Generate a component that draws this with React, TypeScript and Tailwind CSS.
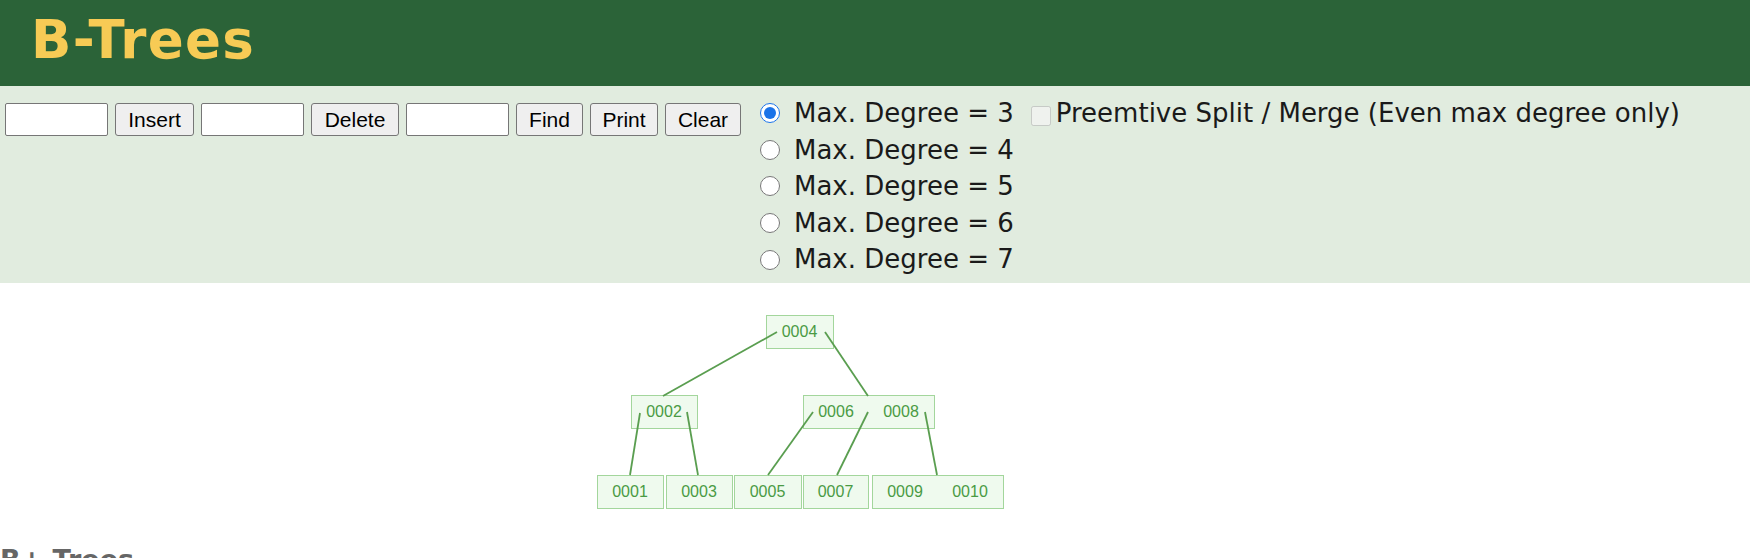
import { useState } from "react";

type TreeNode = { x: number; y: number; w: number; keys: string[] };

// page coordinates, the svg starts at y = 283
const TOP = 283;

const nodes: TreeNode[] = [
  { x: 766, y: 315, w: 67, keys: ["0004"] },
  { x: 631, y: 395, w: 66, keys: ["0002"] },
  { x: 803, y: 395, w: 131, keys: ["0006", "0008"] },
  { x: 597, y: 475, w: 66, keys: ["0001"] },
  { x: 666, y: 475, w: 66, keys: ["0003"] },
  { x: 734, y: 475, w: 67, keys: ["0005"] },
  { x: 803, y: 475, w: 65, keys: ["0007"] },
  { x: 872, y: 475, w: 131, keys: ["0009", "0010"] },
];

const edges = [
  [777, 332, 663, 396],
  [825, 332, 868, 396],
  [640, 413, 630, 475],
  [687, 412, 698, 475],
  [813, 412, 768, 475],
  [868, 412, 837, 475],
  [925, 412, 937, 475],
];

const degrees = [3, 4, 5, 6, 7];

const buttonClass =
  "h-[33px] rounded-[3px] border border-[#767676] bg-[#efefef] text-[21px] text-black font-['Liberation_Sans',Arial,sans-serif] leading-none";
const inputClass =
  "h-[33px] w-[103px] rounded-[2px] border border-[#767676] bg-white";

export default function App() {
  const [degree, setDegree] = useState(3);

  return (
    <div className="bg-white">
      <div className="h-[86px] bg-[#2b6338] pl-[31px] pt-[13px]">
        <h1 className="font-['DejaVu_Sans',Verdana,sans-serif] text-[53px] font-bold leading-none tracking-[1.4px] text-[#f7cb55]">
          B-Trees
        </h1>
      </div>

      <div className="flex h-[197px] items-start bg-[#e1ecdf] pl-[5px] pt-[9px]">
        <div className="mt-[8px] flex gap-[7px]">
          <input className={inputClass} />
          <button className={`${buttonClass} w-[79px]`}>Insert</button>
          <input className={inputClass} />
          <button className={`${buttonClass} w-[88px]`}>Delete</button>
          <input className={inputClass} />
          <button className={`${buttonClass} w-[67px]`}>Find</button>
          <button className={`${buttonClass} w-[68px]`}>Print</button>
          <button className={`${buttonClass} w-[76px]`}>Clear</button>
        </div>

        <div className="ml-[19px] flex flex-col font-['DejaVu_Sans',Verdana,sans-serif] text-[26px] leading-[36.6px] text-[#1a1a1a]">
          {degrees.map((d) => (
            <label key={d} className="flex items-center gap-[14px]">
              <input
                type="radio"
                name="degree"
                checked={degree === d}
                onChange={() => setDegree(d)}
                className="m-0 h-5 w-5 accent-[#1a73e8]"
              />
              <span>Max. Degree = {d}</span>
            </label>
          ))}
        </div>

        <label className="ml-[17px] flex items-start gap-[5px] font-['DejaVu_Sans',Verdana,sans-serif] text-[26px] leading-[36.6px] text-[#1a1a1a]">
          <input type="checkbox" disabled className="m-0 mt-[11px] h-5 w-5" />
          <span>Preemtive Split / Merge (Even max degree only)</span>
        </label>
      </div>

      <svg width="1750" height="263" className="block">
        {nodes.map((n, i) => (
          <g key={i}>
            <rect
              x={n.x + 0.5}
              y={n.y - TOP + 0.5}
              width={n.w}
              height={33}
              fill="#effaee"
              stroke="#a3d69c"
              strokeWidth="1"
            />
            {n.keys.map((k, j) => (
              <text
                key={k}
                x={n.keys.length === 1 ? n.x + n.w / 2 : n.x + 33 + 65 * j}
                y={n.y - TOP + 22}
                textAnchor="middle"
                fill="#4a9a44"
                fontSize="16"
                fontFamily="'Liberation Sans', Arial, sans-serif"
              >
                {k}
              </text>
            ))}
          </g>
        ))}
        {edges.map(([x1, y1, x2, y2], i) => (
          <line
            key={i}
            x1={x1}
            y1={y1 - TOP}
            x2={x2}
            y2={y2 - TOP}
            stroke="#5a9e50"
            strokeWidth="1.8"
          />
        ))}
      </svg>

      <h2 className="font-['DejaVu_Sans',Verdana,sans-serif] text-[27px] font-bold leading-none text-[#666]">
        B+ Trees
      </h2>
    </div>
  );
}
